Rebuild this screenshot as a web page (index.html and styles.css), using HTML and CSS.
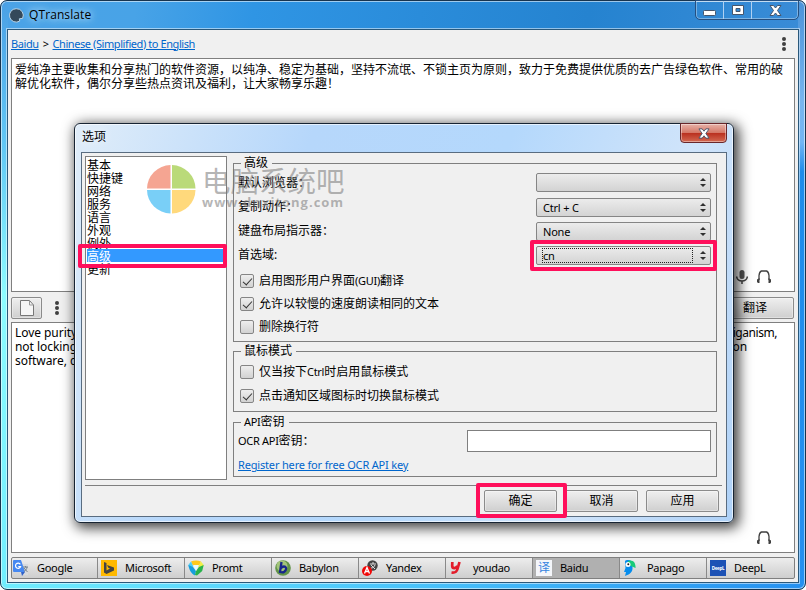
FILE: index.html
```html
<!DOCTYPE html>
<html lang="zh-CN">
<head>
  <meta charset="UTF-8">
  <title>QTranslate</title>
  <link rel="stylesheet" href="styles.css">
</head>
<body>
  <div class="window">
    <header class="titlebar">
      <svg class="app-icon" width="15" height="15" viewBox="0 0 15 15"><path d="M7.2 .7a6.7 6.7 0 1 0 3.500 12.400l-.4-2.300 3.300-.4A6.700 6.700 0 0 0 7.200.7z" fill="#34495a" stroke="#b9d4e8"/></svg>
      <span class="title">QTranslate</span>
      <div class="controls">
        <span class="min"><svg width="13" height="6"><rect x=".5" y=".5" width="12" height="5" rx="1" fill="#fff" stroke="#46566d"/></svg></span>
        <span class="max"><svg width="12" height="10"><path d="M.5.5h11v9H.5zM4 3.500v3h4v-3z" fill="#fff" fill-rule="evenodd" stroke="#46566d"/></svg></span>
        <span class="close"><svg width="13" height="11" viewBox="0 0 13 11"><path d="M1 .5h3.500L6.500 3l2-2.500H12L8.500 5.500l3.500 5H8.500L6.500 8l-2 2.500H1l3.500-5z" fill="#fff" stroke="#46566d"/></svg></span>
      </div>
    </header>
    <main class="client">
      <div class="langbar">
        <a>Baidu</a><span>&gt;</span><a>Chinese (Simplified) to English</a>
        <svg class="dots" width="6" height="16"><g fill="#404040"><circle cx="3" cy="3" r="2"/><circle cx="3" cy="8" r="2"/><circle cx="3" cy="13" r="2"/></g></svg>
      </div>
      <section class="pane source">
        <p>爱纯净主要收集和分享热门的软件资源，以纯净、稳定为基础，坚持不流氓、不锁主页为原则，致力于免费提供优质的去广告绿色软件、常用的破<br>解优化软件，偶尔分享些热点资讯及福利，让大家畅享乐趣！</p>
        <div class="tools">
          <svg width="12" height="14" viewBox="0 0 12 14"><rect x="3.500" y="0" width="5" height="9" rx="2.500" fill="#555"/><path d="M.7 6.500c.2 6 10.400 6 10.600 0M6 11v3" fill="none" stroke="#404040" stroke-width="1.500"/></svg>
          <svg width="14" height="14" viewBox="0 0 14 14"><path d="M2 10V5.500Q2.500 1.500 4.500 1h5q2 .5 2.500 4.500V10" fill="none" stroke="#404040" stroke-width="1.300"/><path d="M0 9.500 2.500 8v5H1L0 12zM14 9.500 11.500 8v5H13l1-1z" fill="#404040"/></svg>
        </div>
      </section>
      <div class="actions">
        <button class="btn new"><svg width="14" height="16" viewBox="0 0 14 16"><path d="M.5.5h9l4 4.500v10.500H.5z" fill="#f6f6f6" stroke="#777"/><path d="M9.500.5V5h4" fill="none" stroke="#999"/></svg></button>
        <svg class="dots" width="6" height="16"><g fill="#404040"><circle cx="3" cy="3" r="2"/><circle cx="3" cy="8" r="2"/><circle cx="3" cy="13" r="2"/></g></svg>
        <button class="btn translate">翻译</button>
      </div>
      <section class="pane result">
        <div class="line"><span>Love purity</span><span class="tail">hooliganism,</span></div>
        <div class="line"><span>not locking</span><span class="short">on</span></div>
        <div class="line"><span>software, commonly</span></div>
        <div class="tools">
          <svg width="14" height="14" viewBox="0 0 14 14"><path d="M2 10V5.500Q2.500 1.500 4.500 1h5q2 .5 2.500 4.500V10" fill="none" stroke="#404040" stroke-width="1.300"/><path d="M0 9.500 2.500 8v5H1L0 12zM14 9.500 11.500 8v5H13l1-1z" fill="#404040"/></svg>
        </div>
      </section>
      <nav class="tabs">
        <div class="tab"><svg width="16" height="16"><path d="M5 4h10v11H8z" fill="#d8dadd"/><path d="M1 0h7l4 12H1a1 1 0 0 1-1-1V1a1 1 0 0 1 1-1z" fill="#4688f1"/><path d="m8 12 4 0-3 4z" fill="#3061c8"/><path d="M7.300 4.300A2.600 2.600 0 1 0 7.600 6.500H5.300" fill="none" stroke="#fff" stroke-width="1.200"/><path d="M10 7h5M12.500 6v1.500M14 7c0 2-2 4-3 4.500M11 8l3.500 4" fill="none" stroke="#77838c"/></svg>Google</div>
        <div class="tab"><svg width="16" height="16"><path d="M0 0h16v16H0z" fill="#ffb900"/><path d="M3 2l2.500 1v7.500l3.500-2-1.700-.8L6 5l7 2.500v3L5.500 14 3 12.500z" fill="#444"/></svg>Microsoft</div>
        <div class="tab"><svg width="16" height="16"><path d="M3 1.500C6 .2 10 .2 13 1.500L11 6H5z" fill="#ffc91c"/><path d="M3 1.500 5 6 5 7 3 11 .3 5z" fill="#50cdf5"/><path d="M.3 5 5 7l3 4-1 4.500C3 14 1 9 .3 5z" fill="#169edd"/><path d="M13 1.500 15.700 5 14 10 10 7l1-2z" fill="#f0ef48"/><path d="m15.700 5-1.500 6L9 15.500 7 15l1-4 3-4z" fill="#29b34c"/><path d="m5 5 6 0-3 6z" fill="#e7faff"/></svg>Promt</div>
        <div class="tab"><svg width="16" height="16"><circle cx="8" cy="8" r="7.800" fill="#629448"/><circle cx="7" cy="6" r="5.500" fill="#a3c47a"/><path d="M6.500 2 5 12c6 2 8-5.500 4-5.500-1.500 0-2.500.6-3.500 2" fill="none" stroke="#17268c" stroke-width="2.300"/></svg>Babylon</div>
        <div class="tab"><svg width="16" height="16"><circle cx="10.500" cy="5.500" r="5.200" fill="#444"/><path d="M8 4h6M11 2v2M13 5c-1 2-2 3-4 3M9 5l4 4" stroke="#ddd" fill="none"/><circle cx="5" cy="11" r="5" fill="#f00808"/><path d="m2.500 13.500 2.500-6 2.500 6M3.500 11.500h3" stroke="#fff" fill="none" stroke-width="1.300"/></svg>Yandex</div>
        <div class="tab"><svg width="16" height="16"><path d="M3.300 2 3.200 6C3.500 9 7 8.500 8.500 6M10.500 2 8.500 9C7.500 12.500 6 13 2.500 12.500" fill="none" stroke="#e31c2b" stroke-width="2.700"/></svg>youdao</div>
        <div class="tab active"><span class="yi">译</span>Baidu</div>
        <div class="tab"><svg width="16" height="16"><path d="M2 1C4-1 9 0 9.500 3L9.500 9C9 13 5 15 2 16L3 12 1 12 2.500 8z" fill="#078ded"/><path d="M5 1C10-1 13 3 12.500 8L9 6.500 5 5z" fill="#19ca78"/><circle cx="5" cy="4.500" r="2.500" fill="#fff"/><circle cx="5.300" cy="4.300" r="1" fill="#222"/></svg>Papago</div>
        <div class="tab"><span class="deepl">DeepL</span>DeepL</div>
      </nav>
    </main>
  </div>

  <div class="dialog">
    <header class="dialog-title"><span>选项</span>
      <div class="dialog-close"><svg width="12" height="11" viewBox="0 0 13 11"><path d="M1 .5h3.500L6.500 3l2-2.500H12L8.500 5.500l3.500 5H8.500L6.500 8l-2 2.500H1l3.500-5z" fill="#fff" stroke="#46566d"/></svg></div>
    </header>
    <div class="dialog-body">
      <div class="settings">
        <ul class="categories">
          <li>基本</li><li>快捷键</li><li>网络</li><li>服务</li><li>语言</li><li>外观</li><li>例外</li><li class="selected">高级</li><li>更新</li>
        </ul>
        <div class="groups">
          <fieldset class="advanced">
            <legend>高级</legend>
            <div class="field"><label>默认浏览器：</label><div class="select"></div></div>
            <div class="field"><label>复制动作：</label><div class="select">Ctrl + C</div></div>
            <div class="field"><label>键盘布局指示器：</label><div class="select">None</div></div>
            <div class="field"><label>首选域:</label><div class="select"><span class="focus">cn</span></div></div>
            <div class="checks">
              <div class="check on"><i></i>启用图形用户界面<b>(GUI)</b>翻译</div>
              <div class="check on"><i></i>允许以较慢的速度朗读相同的文本</div>
              <div class="check"><i></i>删除换行符</div>
            </div>
          </fieldset>
          <fieldset class="mouse">
            <legend>鼠标模式</legend>
            <div class="check"><i></i>仅当按下<b>Ctrl</b>时启用鼠标模式</div>
            <div class="check on"><i></i>点击通知区域图标时切换鼠标模式</div>
          </fieldset>
          <fieldset class="api">
            <legend><b>API</b>密钥</legend>
            <div class="field"><label><b>OCR API</b>密钥：</label><input type="text"></div>
            <a>Register here for free OCR API key</a>
          </fieldset>
        </div>
      </div>
      <footer class="buttons"><button class="btn">确定</button><button class="btn">取消</button><button class="btn">应用</button></footer>
    </div>
  </div>

  <div class="watermark">
    <svg width="49" height="49" viewBox="0 0 49 49"><path d="M23.500 0v23.500H0A24 24 0 0 1 23.500 0z" fill="#f59c87"/><path d="M25 0a24 24 0 0 1 23.500 23.500H25z" fill="#b3d66b"/><path d="M0 25h23.500v23.500A24 24 0 0 1 0 25z" fill="#6bcaf7"/><path d="M25 25h23.500A24 24 0 0 1 25 48.500z" fill="#ffd56e"/></svg>
    <div class="brand"><div class="name">电脑系统吧</div><div class="site">www.dnxitong.com</div></div>
  </div>
  <div class="mark mark-list"></div>
  <div class="mark mark-domain"></div>
  <div class="mark mark-ok"></div>
</body>
</html>
```
FILE: styles.css
```css
:root {
  --line: #7f7f7f;
  --face: #f0f0f0;
  --pink: #ff0f5b;
  --link: #0066cc;
  --ui: "Noto Sans", "Noto Sans CJK SC", sans-serif;
}

* { box-sizing: border-box; }
body {
  margin: 0;
  width: 806px;
  height: 590px;
  overflow: hidden;
  background: #fff;
  color: #000;
  font: 12px/14px var(--ui);
}
b { font-weight: normal; font-size: 11px; letter-spacing: -0.3px; }
a { color: var(--link); text-decoration: underline; }
button { font: inherit; color: inherit; padding: 0; }

/* Main window */
.window {
  display: flex;
  flex-direction: column;
  width: 806px;
  height: 590px;
  padding: 0 6px 6px;
  border: 1px solid #17344f;
  border-radius: 7px;
  box-shadow: inset 0 0 0 1px rgba(255,255,255,.55);
  background:
    linear-gradient(90deg, #70eeff, #4ac4fb 50%, #2590f0) bottom / 100% 7px no-repeat,
    linear-gradient(#4aa0e5, #62c8f5 25%, #8dfbff 50%, #70eeff) left / 7px 100% no-repeat,
    linear-gradient(#4a93da, #77b5ee 17%, #72b6f4 24%, #1d8cea 29%, #2590f0) right / 7px 100% no-repeat,
    linear-gradient(100deg, #4ba3e7, #48a3e7 15%, #2f95e4 28%, #2583d0 65%, #4390da);
}
.titlebar { display: flex; height: 28px; flex: none; padding-left: 2px; }
.app-icon { margin-top: 7px; }
.title { margin: 7px 0 0 5px; font: 12px/14px "Open Sans", sans-serif; letter-spacing: .1px; text-shadow: 0 0 6px #bfe2ff, 0 0 10px #bfe2ff; }
.controls { display: flex; width: 104px; height: 20px; margin: -1px 0 0 auto; border: 1px solid #254f80; border-radius: 0 0 5px 5px; box-shadow: inset 0 0 0 1px rgba(255,255,255,.35); }
.controls span { display: flex; align-items: center; justify-content: center; width: 28px; border-right: 1px solid #b0d0f2; }
.controls .min { padding-top: 5px; }
.controls .close { flex: 1; border: 0; }

.client { display: flex; flex-direction: column; flex: 1; padding: 0 3px 2px; border: 1px solid #2a587a; background: var(--face); box-shadow: 0 0 0 1px rgba(255,255,255,.5); }
.langbar { display: flex; align-items: center; gap: 4px; height: 28px; padding: 0 8px 1px 0; font-size: 11px; letter-spacing: -.42px; }
.langbar .dots { margin-left: auto; }
.pane { position: relative; border: 1px solid var(--line); background: #fff; }
.source { height: 234px; padding: 4px 3px; white-space: nowrap; }
.source p { margin: 0; }
.tools { position: absolute; right: 23px; bottom: 7px; display: flex; gap: 9px; }
.actions { display: flex; align-items: center; height: 30px; padding-top: 2px; }
.btn { border: 1px solid #8b8b8b; border-radius: 2px; background: linear-gradient(#efefef, #cfcfcf); box-shadow: inset 0 0 0 1px rgba(255,255,255,.35); }
.new { width: 31px; height: 22px; display: flex; align-items: center; justify-content: center; }
.actions .dots { margin-left: 12px; }
.translate { width: 78px; height: 22px; margin-left: auto; margin-right: 1px; }
.result { height: 231px; padding: 3px 17px 0 3px; }
.line { display: flex; justify-content: space-between; letter-spacing: -.05px; }
.tail { letter-spacing: -.45px; }
.short { margin-right: 30px; }
.tabs { display: grid; grid-template-columns: 86px repeat(8, 87px); width: 784px; height: 22px; margin-top: 4px; border: 1px solid var(--line); border-radius: 2px; background: linear-gradient(#ededed, #cecece); }
.tab { display: flex; align-items: center; gap: 8px; padding-left: 3px; border-right: 1px solid #898989; font-size: 11px; letter-spacing: -.3px; }
.tab:first-child { padding-left: 1px; }
.tab:last-child { border: 0; }
.tab svg, .yi, .deepl { flex: none; width: 16px; height: 16px; }
.active { background: #b0b0b0; }
.yi { background: #f4f6fa; color: #3684df; font-size: 12px; line-height: 15px; text-align: center; letter-spacing: 0; }
.deepl { background: #1d52b5; color: #fff; font: bold 4.500px/16px "Noto Sans", sans-serif; text-align: center; }

/* Options dialog */
.dialog {
  position: absolute;
  left: 74px;
  top: 123px;
  width: 660px;
  height: 400px;
  padding: 0 6px 6px;
  border: 1px solid #172433;
  border-radius: 6px;
  background: linear-gradient(110deg, #e0edf9, #b6d7fb 30%, #b4d8fc 55%, #d0e4fa 78%, #aed1f7);
  box-shadow: inset 0 0 0 1px rgba(255,255,255,.65), 3px 3px 13px 2px rgba(0,0,0,.75);
}
.dialog-title { display: flex; justify-content: space-between; height: 28px; }
.dialog-title > span { padding: 6px 0 0 1px; line-height: 14px; text-shadow: 0 0 8px #fff; }
.dialog-close { display: flex; align-items: center; justify-content: center; width: 47px; height: 20px; margin-top: -1px; border: 1px solid #69272b; border-radius: 0 0 4px 4px; background: linear-gradient(#e7b2a8, #d57867 48%, #b92f1e 50%, #d36952); box-shadow: inset 0 0 0 1px rgba(255,255,255,.4); }
.dialog-body { height: 365px; padding: 3px 6px 0 3px; border: 1px solid #596c80; background: var(--face); }
.settings { display: flex; gap: 6px; height: 330px; border-bottom: 1px solid var(--line); margin-right: -2px; }
.categories { width: 142px; height: 324px; margin: 0; padding: 1px; border: 1px solid var(--line); background: #fff; list-style: none; }
.categories li { height: 13px; line-height: 15px; }
.categories .selected { background: #3399ff; color: #fff; }
.groups { width: 484px; }
fieldset { margin: 0; padding: 0 5px 0 4px; border: 1px solid var(--line); min-width: 0; }
legend { height: 14px; margin-left: 3px; padding: 0 4px 0 3px; line-height: 14px; }
.advanced { height: 186px; }
.mouse { height: 68px; margin-top: 2px; }
.api { height: 62px; margin-top: 3px; }
.field { display: flex; align-items: center; justify-content: space-between; height: 24px; }
.advanced .field:nth-of-type(1) { height: 25px; }
.select { position: relative; width: 175px; height: 19px; padding-left: 6px; border: 1px solid #858585; border-radius: 2px; background: linear-gradient(#ececec, #d3d3d3); font-size: 11px; line-height: 18px; letter-spacing: -.2px; }
.select::before, .select::after { content: ""; position: absolute; right: 4px; top: 4px; border: 3px solid transparent; border-top: 0; border-bottom: 3px solid #303030; }
.select::after { top: 10px; border-top: 3px solid #303030; border-bottom: 0; }
.focus { display: block; width: 151px; height: 15px; margin: 1px 0 0 -1px; border: 1px dotted #222; line-height: 14px; }
.checks { padding-top: 2px; }
.check { display: flex; align-items: center; height: 23px; padding-left: 2px; white-space: nowrap; }
.check i { position: relative; width: 14px; height: 14px; margin-right: 5px; border: 1px solid #858585; border-radius: 2px; background: linear-gradient(#eee, #d2d2d2); }
.on i::after { content: ""; position: absolute; left: 4px; top: 1px; width: 4px; height: 8px; border: solid #333; border-width: 0 1.500px 1.500px 0; transform: rotate(42deg); }
.mouse .check { height: 24px; }
.mouse .check:first-of-type { padding-top: 2px; height: 26px; }
.api input { width: 244px; height: 22px; border: 1px solid var(--line); background: #fff; }
.api a { display: block; margin-top: 5px; font-size: 11px; letter-spacing: -.17px; line-height: 14px; }
.buttons { display: flex; justify-content: flex-end; gap: 8px; margin: 4px 1px 0 0; }
.buttons .btn { width: 73px; height: 22px; }

.watermark { position: absolute; left: 147px; top: 165px; display: flex; gap: 6px; opacity: .9; }
.brand { padding-top: 2px; color: rgba(120,120,120,.6); }
.name { font-size: 28.500px; line-height: 29px; }
.site { font: bold 13px/13px "Open Sans", sans-serif; letter-spacing: 1px; }

/* Highlight frames */
.mark { position: absolute; border: 4px solid var(--pink); border-radius: 2px; }
.mark-list { left: 78px; top: 244px; width: 149px; height: 24px; }
.mark-domain { left: 530px; top: 240px; width: 187px; height: 31px; }
.mark-ok { left: 476px; top: 483px; width: 91px; height: 35px; }
```
